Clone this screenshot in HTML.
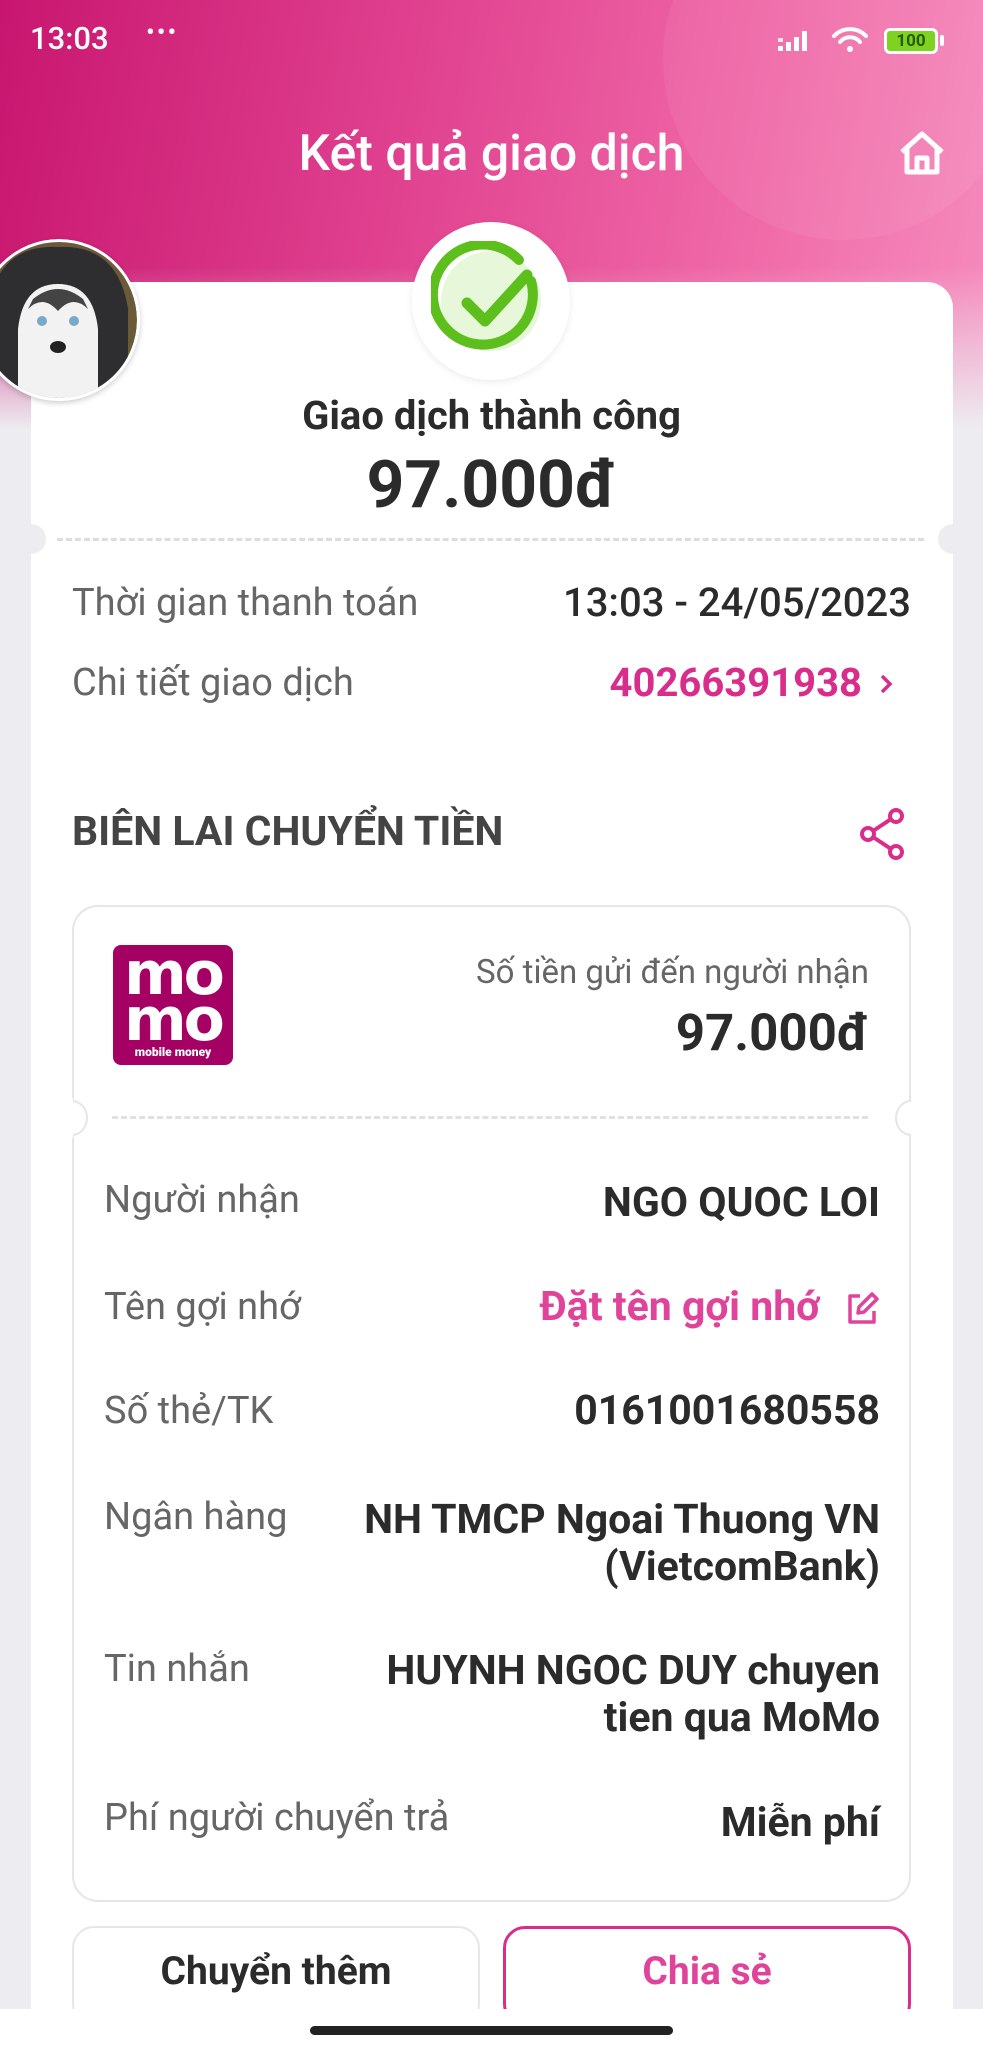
<!DOCTYPE html>
<html><head><meta charset="utf-8">
<style>
*{margin:0;padding:0;box-sizing:border-box}
body{width:983px;height:2048px;overflow:hidden;background:#ededf1;font-family:"Roboto","Liberation Sans",sans-serif;position:relative;color:#222}
.hdr{position:absolute;left:0;top:0;width:983px;height:430px;background:linear-gradient(180deg,rgba(237,237,241,0) 62%,#ededf1 100%),linear-gradient(100deg,#c8166f 0%,#e0418f 40%,#f06aa8 75%,#f58cbd 100%)}
.circ{position:absolute;right:-40px;top:-120px;width:360px;height:360px;border-radius:50%;background:rgba(255,255,255,0.06)}
.abs{position:absolute;line-height:1.2;white-space:nowrap}
.card{position:absolute;left:31px;top:282px;width:922px;height:1760px;background:#fff;border-radius:26px}
.lbl{position:absolute;left:104px;font-size:38px;color:#666;line-height:1.2}
.val{position:absolute;right:103px;font-size:41px;font-weight:bold;color:#2b2b2b;text-align:right;line-height:47px;white-space:nowrap}
.notch{position:absolute;width:30px;height:30px;border-radius:50%;background:#ededf1}
</style></head><body>
<div class="hdr"><div class="circ"></div></div>
<div class="abs" style="left:30px;top:20px;font-size:31px;color:#fff;font-weight:500">13:03</div>
<div class="abs" style="left:146px;top:18px;font-size:26px;color:#fff;letter-spacing:2px">•••</div>
<svg class="abs" style="left:776px;top:26px" width="40" height="30"><g fill="#fff"><rect x="2" y="20" width="5" height="5"/><rect x="10" y="16" width="5" height="9"/><rect x="18" y="11" width="5" height="14"/><rect x="26" y="5" width="5" height="20"/><rect x="2" y="12" width="5" height="4" opacity=".8"/></g></svg>
<svg class="abs" style="left:830px;top:22px" width="40" height="34" fill="none" stroke="#fff" stroke-width="4" stroke-linecap="round"><path d="M4 14 A22 22 0 0 1 36 14"/><path d="M10 20 A13 13 0 0 1 30 20"/><circle cx="20" cy="27" r="3" fill="#fff" stroke="none"/></svg>
<div class="abs" style="left:884px;top:28px;width:54px;height:26px;border:3px solid #fff;border-radius:6px;background:#7ed321;color:#2a5a00;font-size:17px;text-align:center;line-height:20px;font-weight:bold">100</div>
<div class="abs" style="left:940px;top:35px;width:4px;height:11px;background:#fff;border-radius:2px"></div>
<div class="abs" style="left:0;width:983px;top:124px;text-align:center;font-size:50px;color:#fff;font-weight:500">Kết quả giao dịch</div>
<svg class="abs" style="left:898px;top:130px" width="48" height="46" fill="none" stroke="#fff" stroke-width="5" stroke-linejoin="round"><path d="M4 22 L24 4 L44 22 M9 18 V42 H39 V18 M19 42 V28 H29 V42"/></svg>
<div class="card"></div>
<div class="notch" style="left:16px;top:524px"></div><div class="notch" style="left:938px;top:524px"></div>
<div class="abs" style="left:57px;top:538px;width:867px;border-top:3px dashed #ddd"></div>
<div class="abs" style="left:412px;top:222px;width:158px;height:158px;border-radius:50%;background:#fff;box-shadow:0 2px 8px rgba(0,0,0,0.08)"></div>
<svg class="abs" style="left:431px;top:241px" width="120" height="120"><circle cx="60" cy="60" r="50" fill="#e7f7d9"/><path d="M100 40 A50 50 0 1 1 88 19" fill="none" stroke="#5cbf1c" stroke-width="10" stroke-linecap="round"/><path d="M36 62 L54 80 L96 34" fill="none" stroke="#5cbf1c" stroke-width="11" stroke-linecap="round" stroke-linejoin="round"/></svg>
<svg class="abs" style="left:-22px;top:239px;border-radius:50%;box-shadow:0 2px 6px rgba(0,0,0,.2)" width="162" height="162"><defs><clipPath id="c"><circle cx="81" cy="81" r="78"/></clipPath></defs><g clip-path="url(#c)"><rect width="162" height="162" fill="#6b5a38"/><path d="M10 162 V70 Q20 5 80 8 Q140 5 150 70 V162 Z" fill="#2e2e30"/><path d="M40 162 V90 Q45 45 80 45 Q115 45 120 90 V162 Z" fill="#f2f2f2"/><path d="M50 70 Q65 55 80 72 Q95 55 110 70 L105 60 Q80 40 55 60 Z" fill="#444"/><circle cx="64" cy="82" r="5" fill="#7aa8c8"/><circle cx="96" cy="82" r="5" fill="#7aa8c8"/><ellipse cx="80" cy="108" rx="8" ry="6" fill="#222"/></g><circle cx="81" cy="81" r="79.5" fill="none" stroke="#fff" stroke-width="3"/></svg>
<div class="abs" style="left:0;width:983px;top:392px;text-align:center;font-size:40px;font-weight:bold;color:#2b2b2b">Giao dịch thành công</div>
<div class="abs" style="left:0;width:983px;top:446px;text-align:center;font-size:66px;font-weight:bold;color:#2b2b2b">97.000đ</div>
<div class="abs" style="left:72px;top:581px;font-size:38px;color:#666">Thời gian thanh toán</div>
<div class="abs" style="right:72px;top:579px;font-size:40px;color:#2b2b2b;font-weight:500">13:03 - 24/05/2023</div>
<div class="abs" style="left:72px;top:661px;font-size:38px;color:#666">Chi tiết giao dịch</div>
<div class="abs" style="right:121px;top:659px;font-size:40px;color:#d82d8b;font-weight:bold">40266391938</div>
<svg class="abs" style="left:878px;top:673px" width="16" height="22" fill="none" stroke="#d82d8b" stroke-width="3.5"><path d="M4 3 L12 11 L4 19"/></svg>
<div class="abs" style="left:72px;top:808px;font-size:41px;font-weight:bold;color:#444">BIÊN LAI CHUYỂN TIỀN</div>
<svg class="abs" style="left:856px;top:806px" width="52" height="56" fill="none" stroke="#d82d8b" stroke-width="4"><circle cx="40" cy="10" r="6"/><circle cx="12" cy="28" r="6"/><circle cx="40" cy="46" r="6"/><path d="M17 25 L35 13 M17 31 L35 43"/></svg>
<div class="abs" style="left:72px;top:905px;width:839px;height:997px;border:2px solid #e6e6e6;border-radius:26px"></div>
<div class="notch" style="left:56px;top:1100px;width:32px;height:36px;background:#fff;border:2px solid #e6e6e6;clip-path:inset(0 0 0 50%)"></div>
<div class="abs" style="left:55px;top:1098px;width:18px;height:40px;background:#fff"></div>
<div class="notch" style="left:895px;top:1100px;width:32px;height:36px;background:#fff;border:2px solid #e6e6e6;clip-path:inset(0 50% 0 0)"></div>
<div class="abs" style="left:911px;top:1098px;width:18px;height:40px;background:#fff"></div>
<div class="abs" style="left:112px;top:1116px;width:756px;border-top:3px dashed #e0e0e0"></div>
<div class="abs" style="left:113px;top:945px;width:120px;height:120px;background:#a50064;border-radius:8px;color:#fff;font-weight:900;text-align:center">
<div style="font-size:60px;line-height:46px;margin-top:6px;letter-spacing:-3px;font-family:'DejaVu Sans',sans-serif;font-weight:bold">mo<br>mo</div><div style="font-size:12px;margin-top:2px;line-height:14px">mobile money</div></div>
<div class="abs" style="right:114px;top:953px;font-size:33px;color:#666">Số tiền gửi đến người nhận</div>
<div class="abs" style="right:114px;top:1003px;font-size:51px;font-weight:bold;color:#2b2b2b">97.000đ</div>
<div class="lbl" style="top:1178px">Người nhận</div><div class="val" style="top:1180px">NGO QUOC LOI</div>
<div class="lbl" style="top:1285px">Tên gợi nhớ</div><div class="val" style="top:1284px;right:163px;color:#e0449a">Đặt tên gợi nhớ</div>
<svg class="abs" style="left:844px;top:1291px" width="36" height="36" fill="none" stroke="#e0449a" stroke-width="3.5" stroke-linejoin="round"><path d="M16 5 H6 V31 H30 V20"/><path d="M14 22 L15 16 L28 3 L33 8 L20 21 Z"/></svg>
<div class="lbl" style="top:1389px">Số thẻ/TK</div><div class="val" style="top:1388px">0161001680558</div>
<div class="lbl" style="top:1495px">Ngân hàng</div><div class="val" style="top:1497px">NH TMCP Ngoai Thuong VN<br>(VietcomBank)</div>
<div class="lbl" style="top:1647px">Tin nhắn</div><div class="val" style="top:1648px">HUYNH NGOC DUY chuyen<br>tien qua MoMo</div>
<div class="lbl" style="top:1796px">Phí người chuyển trả</div><div class="val" style="top:1800px">Miễn phí</div>
<div class="abs" style="left:72px;top:1926px;width:408px;height:100px;border:2px solid #e6e6e6;border-radius:22px;text-align:center;font-size:39px;font-weight:bold;color:#2b2b2b;padding-top:20px">Chuyển thêm</div>
<div class="abs" style="left:503px;top:1926px;width:408px;height:100px;border:3px solid #d82d8b;border-radius:22px;text-align:center;font-size:39px;font-weight:bold;color:#e0449a;padding-top:19px">Chia sẻ</div>
<div class="abs" style="left:0;top:2009px;width:983px;height:39px;background:#fff"></div>
<div class="abs" style="left:310px;top:2026px;width:363px;height:9px;border-radius:5px;background:#222"></div>
</body></html>
